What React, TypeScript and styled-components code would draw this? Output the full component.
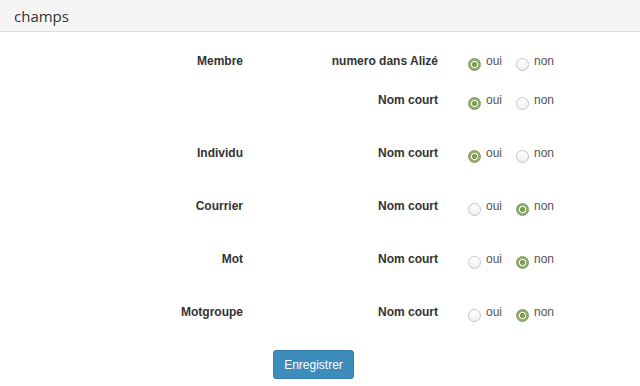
import React from "react";
import styled, { createGlobalStyle } from "styled-components";

const Global = createGlobalStyle`
  html, body { margin: 0; padding: 0; background: #fff; }
  body { font-family: "Liberation Sans", Arial, sans-serif; color: #333; }
`;

const Header = styled.div`
  height: 32px;
  box-sizing: border-box;
  background: #f5f5f5;
  border-bottom: 1px solid #dddddd;
  padding: 0 14px;
  display: flex;
  align-items: center;
  font-family: "Open Sans", sans-serif;
  font-size: 15px;
  color: #333;
`;

const Form = styled.div`
  padding-top: 19px;
`;

const Group = styled.div`
  display: grid;
  row-gap: 19px;
  margin-bottom: 33px;
`;

const Row = styled.div`
  display: grid;
  grid-template-columns: 243px 195px 1fr;
  height: 20px;
  line-height: 20px;
  font-size: 12px;
`;

const Label = styled.div`
  text-align: right;
  font-weight: bold;
  color: #333;
`;

const Options = styled.div`
  display: flex;
  padding-left: 30px;
  gap: 14px;
`;

const Option = styled.label`
  display: flex;
  align-items: flex-start;
  color: #555;
  font-size: 12px;
`;

const Radio = styled.span<{ $checked: boolean }>`
  width: 13px;
  height: 13px;
  box-sizing: border-box;
  border-radius: 50%;
  margin-top: 7px;
  margin-right: 5px;
  flex: none;
  ${(p) =>
    p.$checked
      ? `background: radial-gradient(circle, #7f9f52 0 2.3px, #ffffff 2.8px 3.3px, #93ae70 3.8px);
         border: 1px solid #7f9a5c;`
      : `background: linear-gradient(#ffffff, #f0f0f0);
         border: 1px solid #c4c4c4;`}
`;

const ButtonRow = styled.div`
  padding-left: 273px;
  margin-top: -5px;
`;

const Button = styled.button`
  width: 81px;
  height: 29px;
  background: #3c8dbc;
  border: 1px solid #367fa9;
  border-radius: 3px;
  color: #fff;
  font-family: "Liberation Sans", Arial, sans-serif;
  font-size: 12px;
  padding: 0;
`;

type RowData = { group?: string; field: string; oui: boolean };

const groups: RowData[][] = [
  [
    { group: "Membre", field: "numero dans Alizé", oui: true },
    { field: "Nom court", oui: true },
  ],
  [{ group: "Individu", field: "Nom court", oui: true }],
  [{ group: "Courrier", field: "Nom court", oui: false }],
  [{ group: "Mot", field: "Nom court", oui: false }],
  [{ group: "Motgroupe", field: "Nom court", oui: false }],
];

export default function App() {
  return (
    <>
      <Global />
      <Header>champs</Header>
      <Form>
        {groups.map((g, gi) => (
          <Group key={gi}>
            {g.map((r, ri) => (
              <Row key={ri}>
                <Label>{r.group ?? ""}</Label>
                <Label>{r.field}</Label>
                <Options>
                  <Option>
                    <Radio $checked={r.oui} />
                    oui
                  </Option>
                  <Option>
                    <Radio $checked={!r.oui} />
                    non
                  </Option>
                </Options>
              </Row>
            ))}
          </Group>
        ))}
        <ButtonRow>
          <Button>Enregistrer</Button>
        </ButtonRow>
      </Form>
    </>
  );
}
